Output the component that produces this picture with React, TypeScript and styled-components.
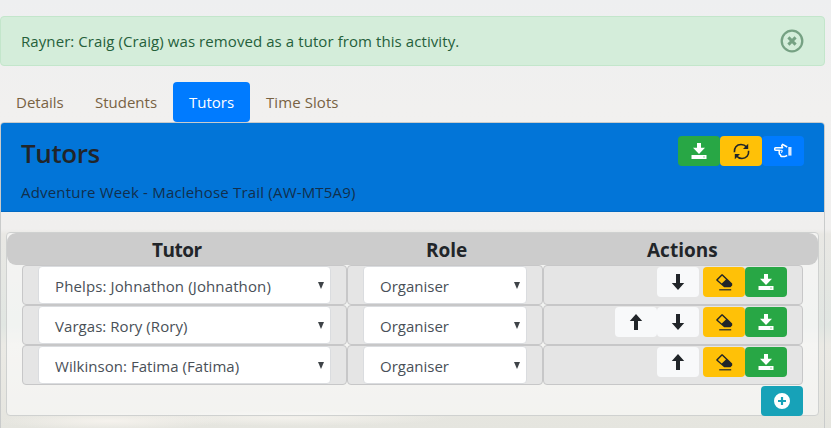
import React from "react";
import styled, { createGlobalStyle } from "styled-components";

const GlobalStyle = createGlobalStyle`
  * { box-sizing: border-box; }
  body {
    margin: 0;
    overflow: hidden;
    font-family: "Open Sans", "Noto Sans", sans-serif;
    font-size: 15px;
    line-height: 24px;
    color: #212529;
  }
`;

const Page = styled.div`
  height: 428px;
  padding: 16px 6px 0 0;
  background:
    radial-gradient(ellipse 110px 9px at 110px 421px, #f5f2ed 0%, transparent 100%),
    radial-gradient(ellipse 160px 8px at 290px 418px, #f3f1ec 0%, transparent 100%),
    linear-gradient(#eeeff0 0, #f1f0ef 110px, #f0efee 229px, #e9e8e4 234px, #e1e6e2 325px, #ebeae5 345px, #e5e5df 428px);
`;

const Alert = styled.div`
  height: 50px;
  padding: 0 20px;
  display: flex;
  align-items: center;
  justify-content: space-between;
  color: #25603a;
  background: #d4edda;
  border: 1px solid #c3e6cb;
  border-radius: 4px;
`;

const Label = styled.span<{ $tracking?: number }>`
  white-space: nowrap;
  letter-spacing: ${({ $tracking = 0 }) => $tracking}px;
`;

const CloseButton = styled.button`
  display: flex;
  padding: 0;
  border: 0;
  background: none;
  color: #76a183;
`;

const Tabs = styled.nav`
  display: flex;
  margin-top: 16px;
`;

const Tab = styled.a<{ $width: number; $active?: boolean }>`
  width: ${({ $width }) => $width}px;
  height: 40px;
  padding: 8px 0 8px 16px;
  border-radius: 4px;
  color: ${({ $active }) => ($active ? "#fff" : "#786243")};
  background: ${({ $active }) => ($active ? "#007bff" : "transparent")};
`;

const Card = styled.section`
  height: 310px;
  border: 1px solid #c9cbcb;
  border-radius: 4px;
`;

const CardHeader = styled.header`
  height: 89px;
  display: flex;
  justify-content: space-between;
  padding: 13px 20px 0;
  background: #0275d8;
  border-bottom: 1px solid #0269c2;
  border-radius: 3px 3px 0 0;
`;

const Title = styled.h3`
  margin: 0 0 10px;
  font-size: 26px;
  line-height: 34px;
  font-weight: 600;
  letter-spacing: -0.4px;
`;

const Subtitle = styled.div`
  color: #112f4d;
`;

const Toolbar = styled.div`
  display: flex;
`;

const tones = {
  green: ["#28a745", "#fff"],
  amber: ["#ffc107", "#212529"],
  blue: ["#007bff", "#fff"],
  light: ["#f8f9fa", "#212529"],
  teal: ["#17a2b8", "#fff"],
};

const IconButton = styled.button<{ $tone: keyof typeof tones; $gap?: boolean }>`
  width: 42px;
  height: 30px;
  padding: 0;
  margin-right: ${({ $gap }) => ($gap ? 4 : 0)}px;
  display: flex;
  align-items: center;
  justify-content: center;
  border: 0;
  border-radius: 4px;
  background: ${({ $tone }) => tones[$tone][0]};
  color: ${({ $tone }) => tones[$tone][1]};
`;

const Panel = styled.div`
  width: 813px;
  height: 184px;
  margin: 20px 0 0 5px;
  border: 1px solid #cfd1d0;
  border-radius: 4px;
  background: rgba(255, 255, 255, 0.52);
`;

const HeadRow = styled.div`
  height: 32px;
  display: grid;
  grid-template-columns: 340px 196px 1fr;
  border-radius: 9px;
  background: #ccc;
  font-size: 19px;
  line-height: 34px;
  font-weight: 700;
`;

const HeadCell = styled.div<{ $indent: number; $tracking: number }>`
  padding-left: ${({ $indent }) => $indent}px;
  letter-spacing: ${({ $tracking }) => $tracking}px;
`;

const Row = styled.div`
  width: 781px;
  height: 40px;
  margin-left: 15px;
  display: grid;
  grid-template-columns: 325px 196px 260px;
`;

const Cell = styled.div`
  display: flex;
  padding: 0 15px;
  border: 1px solid #c7c7c8;
  border-radius: 4px;
  background: #e5e5e5;
`;

const ActionCell = styled(Cell)`
  justify-content: flex-end;
  padding-top: 1px;
`;

const Select = styled.div`
  flex: 1;
  height: 38px;
  display: flex;
  justify-content: space-between;
  padding: 7px 6px 0 16px;
  border: 1px solid #dadcdf;
  border-radius: 4px;
  background: #fff;
  color: #495057;
`;

const Caret = styled.span`
  width: 6px;
  height: 7px;
  margin-top: 8px;
  background: #3e4347;
  clip-path: polygon(0 0, 100% 0, 50% 100%);
`;

const Footer = styled.div`
  display: flex;
  justify-content: flex-end;
  padding: 1px 15px 0 0;
`;

const DownloadIcon = () => (
  <svg width="16" height="16" viewBox="0 0 16 16" fill="currentColor">
    <path d="M6 0h4v4.8h4L8 11 2 4.8h4z" />
    <path fillRule="evenodd" d="M.5 12h15v4H.5zM12.5 13.6v.8h1v-.8z" />
  </svg>
);

const RefreshIcon = () => (
  <svg width="17" height="17" viewBox="0 0 17 17" fill="none" stroke="currentColor" strokeWidth="1.6">
    <path d="M1.4 9.2C1 4.7 3.6 1.5 8 1.5c2.3 0 4.2.8 5.5 2.4M15.6 7.8c.4 4.5-2.2 7.7-6.6 7.7-2.3 0-4.2-.8-5.5-2.4" />
    <path fill="currentColor" stroke="none" d="M15.2.8v5.1H10zM1.8 16.2v-5.1H7z" />
  </svg>
);

const HandIcon = () => (
  <svg width="18" height="16" viewBox="0 0 18 16" fill="none" stroke="currentColor" strokeWidth="1.5" strokeLinejoin="round">
    <path d="M13.2 4L8.6 1.4 7.7 2.6l.9 2.1H1.8C.3 4.7.3 7.2 1.8 7.2h3.4v3c0 .8.5 1.2 1.1 1.2.1 1.5.8 2.2 2 2.2h2.3l2.6-1.1" />
    <path d="M5.2 7.2h2.3c1 0 1 2.2-.6 2.2" strokeWidth="1.1" />
    <path d="M14.3 4h3.2v8.6h-3.2z" fill="#dceaff" stroke="none" />
  </svg>
);

const ArrowIcon = ({ up = false }: { up?: boolean }) => (
  <svg width="14" height="16" viewBox="0 0 14 16" fill="currentColor">
    <path d={up ? "M7 0l6.2 7H9v9H5V7H.8z" : "M7 16l6.2-7H9V0H5v9H.8z"} />
  </svg>
);

const EraserIcon = () => (
  <svg width="17" height="17" viewBox="0 0 17 17" fill="currentColor">
    <path fillRule="evenodd" d="M5.6.3h1l9.6 9.2v2l-1.8 1.7H8.2L.3 6.4v-.8zM6.1 1.8L1.9 6l3.8 3.6L10 5.5z" />
    <path d="M3.2 15.2h12v1.2h-12z" />
  </svg>
);

const CloseIcon = () => (
  <svg width="24" height="24" viewBox="0 0 24 24" fill="none" stroke="currentColor">
    <circle cx="12" cy="12" r="10.3" strokeWidth="2.3" />
    <path d="M8.4 8.4l7.2 7.2M15.6 8.4l-7.2 7.2" strokeWidth="3" />
  </svg>
);

const PlusIcon = () => (
  <svg width="16" height="16" viewBox="0 0 16 16" fill="currentColor">
    <path fillRule="evenodd" d="M8 0a8 8 0 100 16A8 8 0 008 0zM6.9 4h2.2v2.9H12v2.2H9.1V12H6.9V9.1H4V6.9h2.9z" />
  </svg>
);

const tutors = [
  { name: "Phelps: Johnathon (Johnathon)", tracking: 0.12, up: false, down: true },
  { name: "Vargas: Rory (Rory)", tracking: 0.05, up: true, down: true },
  { name: "Wilkinson: Fatima (Fatima)", tracking: 0.04, up: true, down: false },
];

export default function App() {
  return (
    <>
      <GlobalStyle />
      <Page>
        <Alert role="status">
          <Label $tracking={0.08}>Rayner: Craig (Craig) was removed as a tutor from this activity.</Label>
          <CloseButton aria-label="Close"><CloseIcon /></CloseButton>
        </Alert>
        <Tabs>
          <Tab $width={79}><Label>Details</Label></Tab>
          <Tab $width={94}><Label>Students</Label></Tab>
          <Tab $width={77} $active><Label>Tutors</Label></Tab>
          <Tab $width={105}><Label $tracking={0.08}>Time Slots</Label></Tab>
        </Tabs>
        <Card>
          <CardHeader>
            <div>
              <Title>Tutors</Title>
              <Subtitle><Label $tracking={0.19}>Adventure Week - Maclehose Trail (AW-MT5A9)</Label></Subtitle>
            </div>
            <Toolbar>
              <IconButton $tone="green" aria-label="Download"><DownloadIcon /></IconButton>
              <IconButton $tone="amber" aria-label="Refresh"><RefreshIcon /></IconButton>
              <IconButton $tone="blue" aria-label="Back"><HandIcon /></IconButton>
            </Toolbar>
          </CardHeader>
          <Panel>
            <HeadRow>
              <HeadCell $indent={145} $tracking={-0.5}>Tutor</HeadCell>
              <HeadCell $indent={79} $tracking={0}>Role</HeadCell>
              <HeadCell $indent={104} $tracking={0}>Actions</HeadCell>
            </HeadRow>
            {tutors.map((tutor) => (
              <Row key={tutor.name}>
                <Cell>
                  <Select><Label $tracking={tutor.tracking}>{tutor.name}</Label><Caret /></Select>
                </Cell>
                <Cell>
                  <Select><Label>Organiser</Label><Caret /></Select>
                </Cell>
                <ActionCell>
                  {tutor.up && <IconButton $tone="light" $gap={!tutor.down} aria-label="Move up"><ArrowIcon up /></IconButton>}
                  {tutor.down && <IconButton $tone="light" $gap aria-label="Move down"><ArrowIcon /></IconButton>}
                  <IconButton $tone="amber" aria-label="Remove"><EraserIcon /></IconButton>
                  <IconButton $tone="green" aria-label="Save"><DownloadIcon /></IconButton>
                </ActionCell>
              </Row>
            ))}
            <Footer>
              <IconButton $tone="teal" aria-label="Add tutor"><PlusIcon /></IconButton>
            </Footer>
          </Panel>
        </Card>
      </Page>
    </>
  );
}
